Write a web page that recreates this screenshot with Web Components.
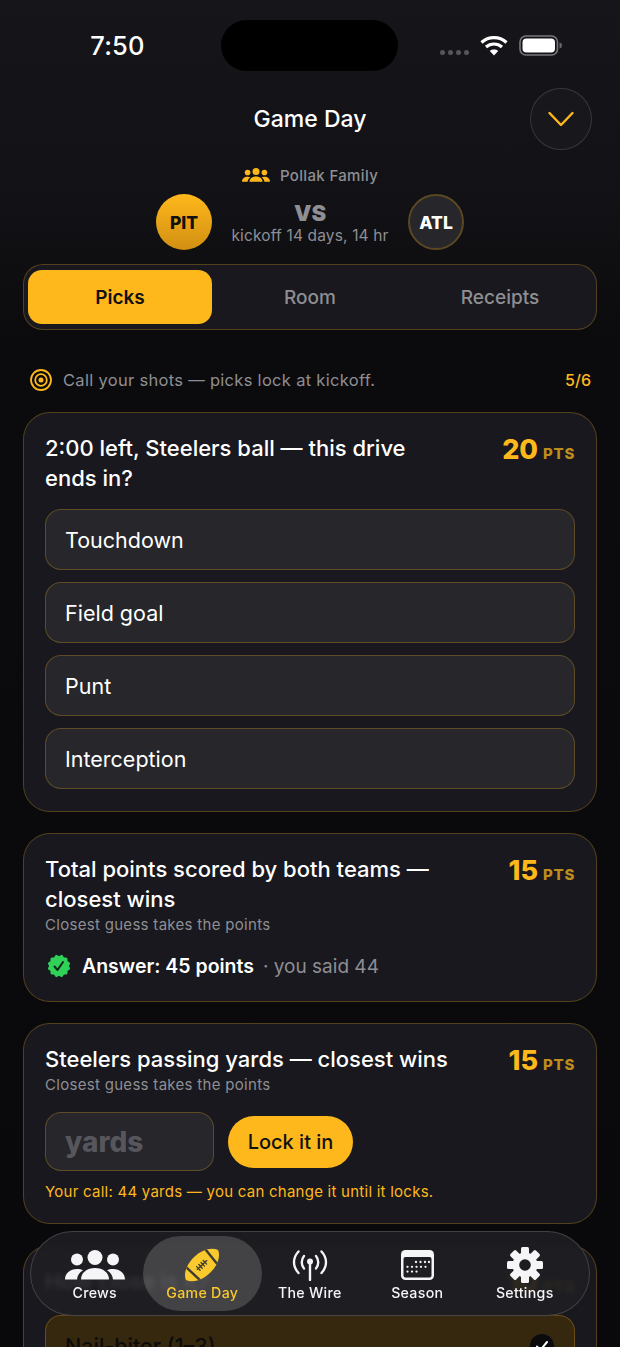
<!DOCTYPE html>
<html lang="en">
<head>
<meta charset="utf-8">
<title>Game Day</title>
<style>
  html, body { margin: 0; height: 1347px; overflow: hidden; background: #08080a; }
  body { font-family: Inter, "Noto Sans", "Liberation Sans", sans-serif; color: #fff; }
</style>
</head>
<body>
<game-day-screen>
  <status-bar time="7:50"></status-bar>
  <screen-title>Game Day</screen-title>
  <match-up crew="Pollak Family" home="PIT" away="ATL" kickoff="kickoff 14 days, 14 hr"></match-up>
  <seg-tabs>
    <seg-tab active>Picks</seg-tab>
    <seg-tab>Room</seg-tab>
    <seg-tab>Receipts</seg-tab>
  </seg-tabs>
  <shot-hint count="5/6">Call your shots — picks lock at kickoff.</shot-hint>
  <pick-card points="20" heading="2:00 left, Steelers ball — this drive ends in?">
    <option-row>Touchdown</option-row>
    <option-row>Field goal</option-row>
    <option-row>Punt</option-row>
    <option-row>Interception</option-row>
  </pick-card>
  <pick-card points="15" heading="Total points scored by both teams — closest wins" sub="Closest guess takes the points">
    <answer-line guess="· you said 44">Answer: 45 points</answer-line>
  </pick-card>
  <pick-card points="15" heading="Steelers passing yards — closest wins" sub="Closest guess takes the points">
    <yards-form note="Your call: 44 yards — you can change it until it locks."></yards-form>
  </pick-card>
  <pick-card points="10" heading="How close is it?">
    <option-row selected>Nail-biter (1–3)</option-row>
  </pick-card>
  <tab-bar slot="overlay">
    <tab-item icon="crews">Crews</tab-item>
    <tab-item icon="football" active>Game Day</tab-item>
    <tab-item icon="wire">The Wire</tab-item>
    <tab-item icon="season">Season</tab-item>
    <tab-item icon="gear">Settings</tab-item>
  </tab-bar>
</game-day-screen>

<script>
  const GOLD = "#ffb81c";

  const crewsIcon = (w, h, fill) => `
    <svg width="${w}" height="${h}" viewBox="0 0 60 30" fill="${fill}">
      <circle cx="12" cy="9.5" r="6"/><circle cx="30" cy="7.5" r="7.5"/><circle cx="48" cy="9.5" r="6"/>
      <path d="M16 29.5c0-7 6-11.500 14-11.500s14 4.500 14 11.500z"/>
      <path d="M0 29.500c0-6 5-10.500 12-10.500 2.500 0 4.500.5 6 1.300-3.500 2.200-5.800 5.300-6 9.200z"/>
      <path d="M60 29.500c0-6-5-10.500-12-10.500-2.500 0-4.500.5-6 1.300 3.500 2.200 5.800 5.300 6 9.200z"/>
    </svg>`;

  const gearTeeth = [0, 45, 90, 135, 180, 225, 270, 315]
    .map((a) => `<rect x="14" y="0" width="8" height="9" rx="1.500" transform="rotate(${a} 18 18)"/>`)
    .join("");

  const calendarDots = [[15, 12], [19.5, 12], [24, 12], [28, 12],
    [6.500, 16.800], [11, 16.800], [15.500, 16.800], [20, 16.800], [24.500, 16.800],
    [6.500, 21.600], [11, 21.600], [15.500, 21.600]]
    .map(([x, y]) => `<circle cx="${x}" cy="${y}" r="1.150"/>`)
    .join("");

  const BALL = "M-4 18C2 3 34 3 40 18 34 33 2 33-4 18z";

  const ICONS = {
    crews: crewsIcon(60, 30, "#f5f5f7"),
    football: `
      <svg width="36" height="36" viewBox="0 0 36 36" style="overflow:visible">
        <defs><clipPath id="ball"><path d="${BALL}"/></clipPath></defs>
        <g transform="rotate(-43 18 18)">
          <path d="${BALL}" fill="#f9c92d"/>
          <g clip-path="url(#ball)" stroke="#3e3b33" stroke-width="2.400">
            <path d="M4.500 4 6.500 32M31.500 4 29.500 32"/>
          </g>
          <g stroke="#3e3b33" stroke-width="1.300" stroke-linecap="round">
            <path d="M11.500 18h13M13 15.500v5M16 15.500v5M19 15.500v5M22 15.500v5"/>
          </g>
        </g>
      </svg>`,
    wire: `
      <svg width="36" height="31" viewBox="0 0 36 31" fill="none" stroke="#f5f5f7" stroke-linecap="round">
        <path stroke-width="2.400" d="M6.500 1.500c-6 6.500-6 15 0 21.500M29.500 1.500c6 6.500 6 15 0 21.500"/>
        <path stroke-width="2.400" d="M12 6c-3 3.500-3 9 0 12.500M24 6c3 3.500 3 9 0 12.500"/>
        <path stroke-width="2.400" d="M18 12v18"/>
        <circle cx="18" cy="11.500" r="3" fill="#f5f5f7" stroke="none"/>
      </svg>`,
    season: `
      <svg width="33" height="30" viewBox="0 0 33 30">
        <rect width="33" height="30" rx="4.500" fill="#f5f5f7"/>
        <rect x="2.500" y="7" width="28" height="20.500" rx="2" fill="#1f1f23"/>
        <g fill="#f5f5f7">${calendarDots}</g>
      </svg>`,
    gear: `
      <svg width="36" height="36" viewBox="0 0 36 36" fill="#f5f5f7">
        ${gearTeeth}
        <circle cx="18" cy="18" r="12.500"/>
        <circle cx="18" cy="18" r="5.800" fill="#1d1d21"/>
      </svg>`,
  };

  // page shell, everything stacked by flow and the bar laid over it
  class GameDayScreen extends HTMLElement {
    constructor() {
      super();
      this.attachShadow({ mode: "open" }).innerHTML = `
        <style>
          :host {
            display: flex;
            flex-direction: column;
            height: 1347px;
            box-sizing: border-box;
            padding: 0 23px;
            overflow: hidden;
            background: linear-gradient(180deg, #15151a 0, #121216 200px, #0b0b0d 340px, #09090b 100%);
          }
          ::slotted(*) { flex: none; }
        </style>
        <slot></slot>
        <slot name="overlay"></slot>`;
    }
  }

  class StatusBar extends HTMLElement {
    constructor() {
      super();
      this.attachShadow({ mode: "open" }).innerHTML = `
        <style>
          :host { display: grid; grid-template-columns: 198px 177px 1fr; align-items: center; height: 51px; padding-top: 20px; }
          .time { font-size: 25.500px; font-weight: 500; text-align: center; margin-left: 12px; width: 165px; letter-spacing: .2px; }
          .island { height: 51px; border-radius: 26px; background: #000; }
          .icons { display: flex; align-items: center; padding-left: 42px; }
          .dots { display: flex; gap: 3px; margin-top: 13px; margin-right: 11px; }
          .dots i { width: 5px; height: 5px; border-radius: 50%; background: #55555a; }
          svg { display: block; }
        </style>
        <div class="time">${this.getAttribute("time")}</div>
        <div class="island"></div>
        <div class="icons">
          <div class="dots"><i></i><i></i><i></i><i></i></div>
          <svg width="28" height="21" viewBox="0 0 28 21" fill="none" stroke="#fff" stroke-width="3.200">
            <path d="M1.500 7.500c7-6.500 18-6.500 25 0"/>
            <path d="M6 12c4.500-4 11.500-4 16 0"/>
            <path d="M14 20.500 9.800 16c2.400-1.900 6-1.900 8.400 0z" fill="#fff" stroke="none"/>
          </svg>
          <svg style="margin-left:11px" width="44" height="21" viewBox="0 0 44 21">
            <rect x="1" y="1" width="37.500" height="19" rx="6" fill="none" stroke="#77777c" stroke-width="1.600"/>
            <rect x="3.500" y="3.500" width="32.500" height="14" rx="4" fill="#fff"/>
            <path d="M40.500 7.500c2 .4 2.500 1.500 2.500 3s-.5 2.600-2.500 3z" fill="#66666a"/>
          </svg>
        </div>`;
    }
  }

  class ScreenTitle extends HTMLElement {
    constructor() {
      super();
      this.attachShadow({ mode: "open" }).innerHTML = `
        <style>
          :host { display: grid; grid-template-columns: 1fr auto 1fr; align-items: center; margin-top: 17px; height: 61px; }
          .title { grid-column: 2; font-size: 23px; font-weight: 500; }
          button {
            grid-column: 3; justify-self: end; margin-right: 5px;
            width: 62px; height: 62px; border-radius: 50%; padding: 0;
            display: flex; align-items: center; justify-content: center;
            background: #17171c; border: 1px solid rgba(255,255,255,.14);
          }
        </style>
        <div class="title"><slot></slot></div>
        <button aria-label="Collapse">
          <svg width="26" height="16" viewBox="0 0 26 16" fill="none" stroke="${GOLD}" stroke-width="2.400" stroke-linecap="round" stroke-linejoin="round">
            <path d="M1.500 2 13 14 24.500 2"/>
          </svg>
        </button>`;
    }
  }

  class MatchUp extends HTMLElement {
    constructor() {
      super();
      const a = (n) => this.getAttribute(n);
      this.attachShadow({ mode: "open" }).innerHTML = `
        <style>
          :host { display: flex; flex-direction: column; align-items: center; margin-top: 16px; }
          .crew { display: flex; align-items: center; gap: 10px; height: 20px; font-size: 15px; font-weight: 500; color: #8e8e93; letter-spacing: .35px; }
          .teams { display: flex; align-items: center; gap: 20px; margin-top: 9px; }
          .team {
            width: 56px; height: 56px; box-sizing: border-box; border-radius: 50%;
            display: flex; align-items: center; justify-content: center;
            font-size: 17.500px; font-weight: 800;
          }
          .home { background: linear-gradient(180deg, #ffb81c, #d18f12); color: #111; }
          .away { background: #26262b; border: 2px solid #5b4823; color: #fff; }
          .mid { width: 156px; display: flex; flex-direction: column; align-items: center; }
          .vs { font-size: 22px; font-weight: 900; line-height: 28px; color: #8e8e93; }
          .kick { font-size: 15.500px; line-height: 18px; color: #8e8e93; letter-spacing: .15px; white-space: nowrap; }
        </style>
        <div class="crew">${crewsIcon(28, 14, GOLD)}<span>${a("crew")}</span></div>
        <div class="teams">
          <div class="team home">${a("home")}</div>
          <div class="mid"><div class="vs">VS</div><div class="kick">${a("kickoff")}</div></div>
          <div class="team away">${a("away")}</div>
        </div>`;
    }
  }

  class SegTabs extends HTMLElement {
    constructor() {
      super();
      this.attachShadow({ mode: "open" }).innerHTML = `
        <style>
          :host {
            display: grid; grid-template-columns: 184px 1fr 184px; gap: 6px;
            margin-top: 14px; padding: 5px 4px; height: 54px;
            background: #18181e; border: 1px solid rgba(255,184,28,.26); border-radius: 20px;
          }
        </style>
        <slot></slot>`;
    }
  }

  class SegTab extends HTMLElement {
    constructor() {
      super();
      this.attachShadow({ mode: "open" }).innerHTML = `
        <style>
          :host {
            display: flex; align-items: center; justify-content: center;
            border-radius: 14px; font-size: 19px; font-weight: 500; color: #8e8e93;
          }
          :host([active]) { background: ${GOLD}; color: #111; font-weight: 600; }
        </style>
        <slot></slot>`;
    }
  }

  class ShotHint extends HTMLElement {
    constructor() {
      super();
      this.attachShadow({ mode: "open" }).innerHTML = `
        <style>
          :host {
            display: flex; align-items: center; height: 22px;
            margin: 39px 6px 21px 7px; font-size: 16.500px; color: #8e8e93;
          }
          svg { margin-right: 11px; flex: none; }
          .text { flex: 1; letter-spacing: .3px; }
          .count { color: ${GOLD}; font-size: 16px; font-weight: 500; }
        </style>
        <svg width="22" height="22" viewBox="0 0 22 22" fill="none" stroke="${GOLD}" stroke-width="1.800">
          <circle cx="11" cy="11" r="10"/><circle cx="11" cy="11" r="5.800"/>
          <circle cx="11" cy="11" r="2.500" fill="${GOLD}" stroke="none"/>
        </svg>
        <span class="text"><slot></slot></span>
        <span class="count">${this.getAttribute("count")}</span>`;
    }
  }

  class PickCard extends HTMLElement {
    constructor() {
      super();
      const sub = this.getAttribute("sub");
      this.attachShadow({ mode: "open" }).innerHTML = `
        <style>
          :host {
            display: block; box-sizing: border-box; margin-bottom: 21px;
            padding: 20px 21px 22px;
            background: #18181e; border: 1px solid rgba(255,184,28,.26); border-radius: 27px;
          }
          .top { display: flex; justify-content: space-between; }
          h2 { margin: 0; max-width: 408px; font-size: 22px; font-weight: 500; line-height: 30px; }
          .pts { flex: none; display: flex; align-items: baseline; gap: 5px; height: 30px; color: ${GOLD}; font-size: 27px; font-weight: 800; line-height: 34px; }
          .pts span { font-size: 15px; color: #be8c1d; letter-spacing: .7px; }
          .sub { font-size: 15px; line-height: 20px; color: #8e8e93; letter-spacing: .3px; margin-top: 1px; }
          .body { display: flex; flex-direction: column; gap: 12px; margin-top: 16px; }
        </style>
        <div class="top">
          <h2>${this.getAttribute("heading")}</h2>
          <div class="pts">${this.getAttribute("points")}<span>PTS</span></div>
        </div>
        ${sub ? `<div class="sub">${sub}</div>` : ""}
        <div class="body"><slot></slot></div>`;
    }
  }

  class OptionRow extends HTMLElement {
    constructor() {
      super();
      const tick = this.hasAttribute("selected") ? `
        <svg width="24" height="24" viewBox="0 0 24 24">
          <circle cx="12" cy="12" r="12" fill="#0b0b0d"/>
          <path d="M7 12.500l3.500 3.500L17 8" fill="none" stroke="#fff" stroke-width="2" stroke-linecap="round" stroke-linejoin="round"/>
        </svg>` : "";
      this.attachShadow({ mode: "open" }).innerHTML = `
        <style>
          :host {
            display: flex; align-items: center; justify-content: space-between;
            height: 61px; box-sizing: border-box; padding: 0 20px 0 19px;
            font-size: 21.500px; color: #fff;
            background: #26262b; border: 1px solid rgba(255,184,28,.26); border-radius: 16px;
          }
          :host([selected]) { background: #35280f; color: #0c0c0c; font-weight: 500; margin-top: 3px; }
        </style>
        <span><slot></slot></span>${tick}`;
    }
  }

  class AnswerLine extends HTMLElement {
    constructor() {
      super();
      this.attachShadow({ mode: "open" }).innerHTML = `
        <style>
          :host { display: flex; align-items: center; height: 26px; margin-top: 2px; font-size: 19.500px; font-weight: 600; }
          svg { margin: 0 10px 0 1px; }
          .guess { margin-left: 9px; font-weight: 400; color: #8e8e93; font-size: 19px; }
        </style>
        <svg width="26" height="26" viewBox="0 0 26 26">
          <g fill="#30d158">
            <rect x="4.500" y="4.500" width="17" height="17" rx="1.500"/>
            <rect x="4.500" y="4.500" width="17" height="17" rx="1.500" transform="rotate(30 13 13)"/>
            <rect x="4.500" y="4.500" width="17" height="17" rx="1.500" transform="rotate(60 13 13)"/>
          </g>
          <path d="M8.500 13.500l3 3.500 5.500-8" fill="none" stroke="#0d2413" stroke-width="2" stroke-linecap="round" stroke-linejoin="round"/>
        </svg>
        <span><slot></slot></span>
        <span class="guess">${this.getAttribute("guess")}</span>`;
    }
  }

  class YardsForm extends HTMLElement {
    constructor() {
      super();
      this.attachShadow({ mode: "open" }).innerHTML = `
        <style>
          :host { display: block; margin: 1px 0 -1px; }
          .row { display: flex; align-items: center; gap: 14px; }
          .input {
            width: 169px; height: 59px; box-sizing: border-box; padding-left: 19px;
            display: flex; align-items: center;
            background: #26262b; border: 1px solid rgba(255,184,28,.26); border-radius: 16px;
            font-size: 28px; font-weight: 800; color: #56565c;
          }
          .btn {
            height: 52px; width: 125px; border-radius: 26px;
            display: flex; align-items: center; justify-content: center;
            background: ${GOLD}; color: #111; font-size: 20px; font-weight: 500;
          }
          .note { margin-top: 11px; font-size: 15px; line-height: 20px; color: ${GOLD}; letter-spacing: .25px; }
        </style>
        <div class="row"><div class="input">yards</div><div class="btn">Lock it in</div></div>
        <div class="note">${this.getAttribute("note")}</div>`;
    }
  }

  class TabBar extends HTMLElement {
    constructor() {
      super();
      this.attachShadow({ mode: "open" }).innerHTML = `
        <style>
          :host {
            position: fixed; left: 30px; top: 1231px; width: 560px; height: 85px;
            box-sizing: border-box; padding: 4px 10px;
            display: grid; grid-template-columns: repeat(5, 107.500px);
            background: rgba(30,30,34,.9);
            -webkit-backdrop-filter: blur(2.500px); backdrop-filter: blur(2.500px);
            border: 1px solid rgba(255,255,255,.17); border-radius: 43px;
          }
        </style>
        <slot></slot>`;
    }
  }

  class TabItem extends HTMLElement {
    constructor() {
      super();
      this.attachShadow({ mode: "open" }).innerHTML = `
        <style>
          :host {
            position: relative; display: flex; flex-direction: column; align-items: center;
            padding-top: 11px; font-size: 14.200px; font-weight: 500; color: #f5f5f7; letter-spacing: .3px;
          }
          :host([active]) { color: #f9c92d; }
          :host([active])::before {
            content: ""; position: absolute; inset: 0 -6px; border-radius: 38px; background: rgba(255,255,255,.17);
          }
          .icon { position: relative; height: 36px; display: flex; align-items: center; justify-content: center; }
          .label { position: relative; line-height: 20px; white-space: nowrap; }
        </style>
        <div class="icon">${ICONS[this.getAttribute("icon")]}</div>
        <div class="label"><slot></slot></div>`;
    }
  }

  customElements.define("game-day-screen", GameDayScreen);
  customElements.define("status-bar", StatusBar);
  customElements.define("screen-title", ScreenTitle);
  customElements.define("match-up", MatchUp);
  customElements.define("seg-tabs", SegTabs);
  customElements.define("seg-tab", SegTab);
  customElements.define("shot-hint", ShotHint);
  customElements.define("pick-card", PickCard);
  customElements.define("option-row", OptionRow);
  customElements.define("answer-line", AnswerLine);
  customElements.define("yards-form", YardsForm);
  customElements.define("tab-bar", TabBar);
  customElements.define("tab-item", TabItem);
</script>
</body>
</html>
